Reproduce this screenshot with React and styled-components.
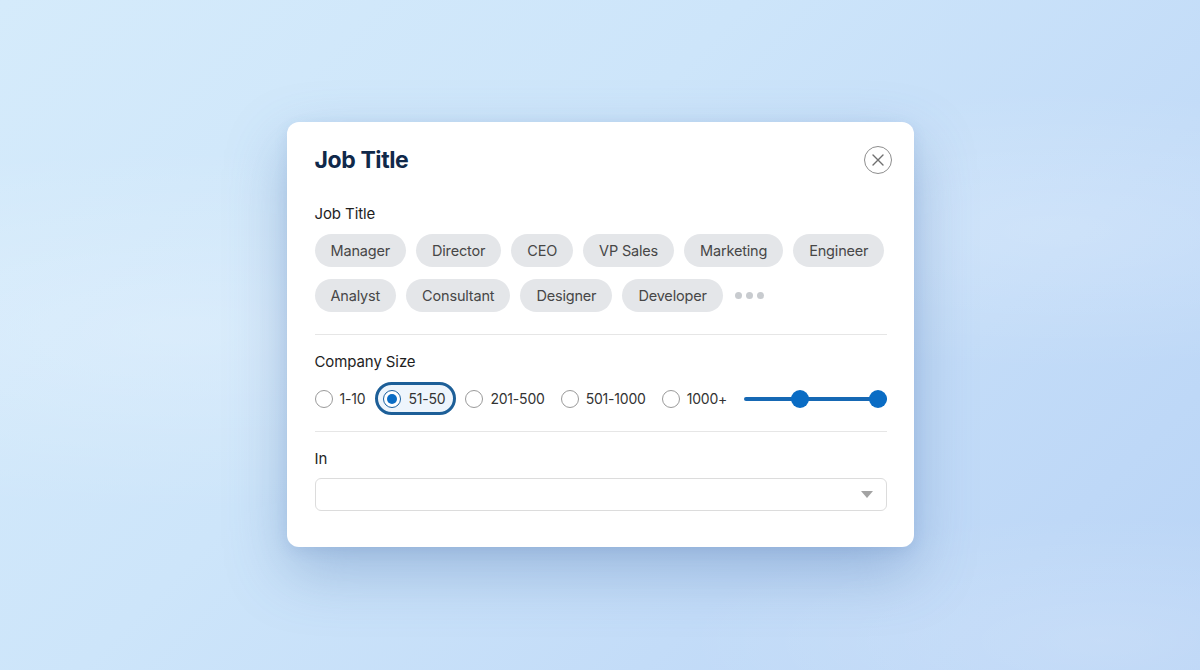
import React from 'react'
import styled, { createGlobalStyle } from 'styled-components'

const GlobalStyle = createGlobalStyle`
  html, body {
    margin: 0;
    padding: 0;
  }
  body {
    font-family: Inter, 'Noto Sans', 'Liberation Sans', sans-serif;
    -webkit-font-smoothing: antialiased;
  }
  * {
    box-sizing: border-box;
  }
`

const Page = styled.div`
  width: 1200px;
  height: 670px;
  overflow: hidden;
  display: flex;
  align-items: center;
  justify-content: center;
  background:
    radial-gradient(ellipse 900px 260px at 180px 330px, rgba(255, 255, 255, 0.22), rgba(255, 255, 255, 0) 70%),
    radial-gradient(ellipse 700px 200px at 1050px 230px, rgba(255, 255, 255, 0.18), rgba(255, 255, 255, 0) 70%),
    radial-gradient(ellipse 600px 180px at 1100px 640px, rgba(255, 255, 255, 0.16), rgba(255, 255, 255, 0) 70%),
    linear-gradient(135deg, #d5ebfb 0%, #cde5fa 40%, #c3dcf8 70%, #b9d4f6 100%);
`

const Card = styled.div`
  width: 627px;
  height: 425px;
  margin-top: -1px;
  background: #fff;
  border-radius: 12px;
  padding: 24px 27px 0 28px;
  box-shadow: 0 24px 60px rgba(70, 110, 170, 0.35), 0 4px 14px rgba(70, 110, 170, 0.12);
`

const Header = styled.div`
  display: flex;
  align-items: center;
  justify-content: space-between;
  height: 28px;
  margin-right: -5px;
`

const Title = styled.h1`
  margin: 0;
  font-size: 23px;
  font-weight: 700;
  color: #10294a;
  letter-spacing: -0.4px;
`

const CloseButton = styled.button`
  width: 28px;
  height: 28px;
  border-radius: 50%;
  border: 1px solid #8e8e8e;
  background: #fff;
  padding: 0;
  display: flex;
  align-items: center;
  justify-content: center;
  color: #6f6f6f;
`

const Label = styled.div`
  font-size: 15px;
  line-height: 20px;
  color: #1e1e1e;
  letter-spacing: -0.1px;
  margin-top: ${(p) => p.$top}px;
`

const ChipWrap = styled.div`
  display: flex;
  flex-wrap: wrap;
  align-items: center;
  gap: 12px 10px;
  margin-top: 10px;
`

const Chip = styled.span`
  height: 33px;
  padding: 0 16px;
  border-radius: 17px;
  background: #e4e6e9;
  color: #474747;
  font-size: 14.5px;
  letter-spacing: -0.18px;
  display: inline-flex;
  align-items: center;
`

const More = styled.span`
  display: inline-flex;
  gap: 4px;
  margin-left: 2px;
  span {
    width: 7px;
    height: 7px;
    border-radius: 50%;
    background: #c8cbcf;
  }
`

const Divider = styled.div`
  height: 1px;
  background: #e6e6e6;
  margin-top: ${(p) => p.$top}px;
`

const RadioRow = styled.div`
  display: flex;
  align-items: center;
  gap: 16px;
  margin-top: 10px;
  height: 33px;
`

const Option = styled.label`
  display: flex;
  align-items: center;
  gap: 7px;
  font-size: 14px;
  letter-spacing: -0.2px;
  color: #333;
  height: 33px;
  ${(p) =>
    p.$selected &&
    `
    border: 3px solid #1d5f98;
    background: #eef5fc;
    border-radius: 17px;
    padding: 0 8px 0 5px;
    margin: 0 -7px 0 -6px;
  `}
`

const Radio = styled.span`
  width: 18px;
  height: 18px;
  border-radius: 50%;
  border: 1.5px solid ${(p) => (p.$checked ? '#1a5f9e' : '#9a9a9a')};
  background: #fff;
  display: flex;
  align-items: center;
  justify-content: center;
  &::after {
    content: '';
    display: ${(p) => (p.$checked ? 'block' : 'none')};
    width: 10px;
    height: 10px;
    border-radius: 50%;
    background: #0a6cc4;
  }
`

const Slider = styled.div`
  flex: 1;
  position: relative;
  height: 18px;
  margin-left: 1px;
`

const Track = styled.div`
  position: absolute;
  left: 0;
  right: 0;
  top: 7px;
  height: 4px;
  border-radius: 2px;
  background: #1668b4;
`

const Thumb = styled.div`
  position: absolute;
  top: 0;
  width: 18px;
  height: 18px;
  margin-left: -9px;
  border-radius: 50%;
  background: #0a6cc4;
`

const Select = styled.div`
  margin-top: 9px;
  height: 33px;
  border: 1px solid #dcdcdc;
  border-radius: 6px;
  display: flex;
  align-items: center;
  justify-content: flex-end;
  padding-right: 13px;
`

const Caret = styled.span`
  width: 0;
  height: 0;
  border-left: 6px solid transparent;
  border-right: 6px solid transparent;
  border-top: 7px solid #a3a3a3;
`

const titles = ['Manager', 'Director', 'CEO', 'VP Sales', 'Marketing', 'Engineer', 'Analyst', 'Consultant', 'Designer', 'Developer']
const sizes = ['1-10', '51-50', '201-500', '501-1000', '1000+']

export default function App() {
  const selected = '51-50'
  const range = [39, 94]
  return (
    <>
      <GlobalStyle />
      <Page>
        <Card>
          <Header>
            <Title>Job Title</Title>
            <CloseButton aria-label="Close">
              <svg width="12" height="12" viewBox="0 0 12 12" fill="none" stroke="currentColor" strokeWidth="1.4" strokeLinecap="round">
                <path d="M1 1L11 11M11 1L1 11" />
              </svg>
            </CloseButton>
          </Header>

          <Label $top={30}>Job Title</Label>
          <ChipWrap>
            {titles.map((t) => (
              <Chip key={t}>{t}</Chip>
            ))}
            <More>
              <span />
              <span />
              <span />
            </More>
          </ChipWrap>

          <Divider $top={22} />
          <Label $top={17}>Company Size</Label>
          <RadioRow>
            {sizes.map((s) => (
              <Option key={s} $selected={s === selected}>
                <Radio $checked={s === selected} />
                {s}
              </Option>
            ))}
            <Slider>
              <Track />
              <Thumb style={{ left: range[0] + '%' }} />
              <Thumb style={{ left: range[1] + '%' }} />
            </Slider>
          </RadioRow>

          <Divider $top={16} />
          <Label $top={17}>In</Label>
          <Select>
            <Caret />
          </Select>
        </Card>
      </Page>
    </>
  )
}
